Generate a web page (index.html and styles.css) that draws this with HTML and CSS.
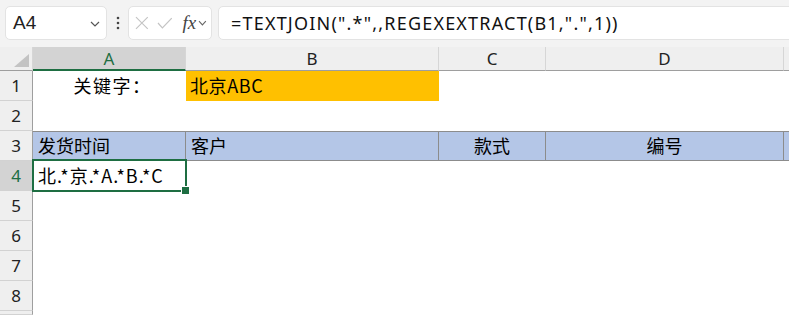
FILE: index.html
```html
<!DOCTYPE html>
<html lang="zh-CN">
<head>
    <meta charset="UTF-8">
    <title>TEXTJOIN</title>
    <link rel="stylesheet" href="styles.css">
</head>
<body>

    <!-- Formula bar -->
    <div class="toolbar">
        <div class="namebox">
            <span>A4</span>
            <svg class="chev" width="10" height="6" viewBox="0 0 10 6"><path d="M1 1 L5 5 L9 1" fill="none" stroke="#555" stroke-width="1.2"/></svg>
        </div>
        <div class="dots">
            <svg width="4" height="14" viewBox="0 0 4 14"><circle cx="2" cy="2" r="1.3" fill="#444"/><circle cx="2" cy="7" r="1.3" fill="#444"/><circle cx="2" cy="12" r="1.3" fill="#444"/></svg>
        </div>
        <div class="fnbox">
            <svg width="14" height="14" viewBox="0 0 14 14"><path d="M1 1 L13 13 M13 1 L1 13" stroke="#c4c4c4" stroke-width="1.2"/></svg>
            <svg width="16" height="12" viewBox="0 0 16 12"><path d="M1 6 L5.5 11 L15 1" fill="none" stroke="#c4c4c4" stroke-width="1.2"/></svg>
            <span class="fx">fx</span>
            <svg width="9" height="6" viewBox="0 0 9 6"><path d="M1 1 L4.5 5 L8 1" fill="none" stroke="#666" stroke-width="1.1"/></svg>
        </div>
        <div class="formula">=TEXTJOIN(".*",,REGEXEXTRACT(B1,".",1))</div>
    </div>

    <!-- Sheet -->
    <div class="sheet">
        <div class="corner"><span class="tri"></span></div>
        <div class="colhead sel">A</div>
        <div class="colhead">B</div>
        <div class="colhead">C</div>
        <div class="colhead">D</div>
        <div class="colhead last"></div>

        <div class="rowhead">1</div>
        <div class="cell center label">关键字：</div>
        <div class="cell key">北京ABC</div>
        <div class="cell"></div>
        <div class="cell"></div>
        <div class="cell"></div>

        <div class="rowhead">2</div>
        <div class="cell"></div>
        <div class="cell"></div>
        <div class="cell"></div>
        <div class="cell"></div>
        <div class="cell"></div>

        <div class="rowhead">3</div>
        <div class="cell title">发货时间</div>
        <div class="cell title">客户</div>
        <div class="cell title center">款式</div>
        <div class="cell title center">编号</div>
        <div class="cell title"></div>

        <div class="rowhead sel">4</div>
        <div class="cell active">北.*京.*A.*B.*C</div>
        <div class="cell"></div>
        <div class="cell"></div>
        <div class="cell"></div>
        <div class="cell"></div>

        <div class="rowhead">5</div>
        <div class="cell"></div><div class="cell"></div><div class="cell"></div><div class="cell"></div><div class="cell"></div>
        <div class="rowhead">6</div>
        <div class="cell"></div><div class="cell"></div><div class="cell"></div><div class="cell"></div><div class="cell"></div>
        <div class="rowhead">7</div>
        <div class="cell"></div><div class="cell"></div><div class="cell"></div><div class="cell"></div><div class="cell"></div>
        <div class="rowhead">8</div>
        <div class="cell"></div><div class="cell"></div><div class="cell"></div><div class="cell"></div><div class="cell"></div>
        <div class="rowhead"></div>
        <div class="cell"></div><div class="cell"></div><div class="cell"></div><div class="cell"></div><div class="cell"></div>
    </div>

</body>
</html>
```

FILE: styles.css
```css
* {
    margin: 0;
    padding: 0;
    box-sizing: border-box;
}

body {
    width: 789px;
    height: 315px;
    overflow: hidden;
    background: #fff;
    font-family: "Noto Sans CJK SC", "Noto Sans", sans-serif;
    color: #000;
}

/* formula bar */
.toolbar {
    height: 47px;
    background: #f3f3f3;
    display: flex;
    align-items: flex-start;
    padding: 6px 0 0 5px;
}

.namebox {
    width: 102px;
    height: 34px;
    background: #fff;
    border: 1px solid #e3e3e3;
    border-radius: 5px;
    display: flex;
    align-items: center;
    justify-content: space-between;
    padding: 0 6px 0 7px;
    font-family: "Liberation Sans", sans-serif;
    font-size: 19px;
    color: #222;
}

.namebox .chev {
    margin-top: 2px;
}

.dots {
    width: 21px;
    height: 34px;
    display: flex;
    align-items: center;
    justify-content: center;
}

.fnbox {
    width: 84px;
    height: 34px;
    background: #fff;
    border: 1px solid #e3e3e3;
    border-radius: 5px;
    display: flex;
    align-items: center;
    padding: 0 4px 0 6px;
    gap: 8px;
}

.fnbox .fx {
    font-family: "Liberation Serif", serif;
    font-style: italic;
    font-size: 19px;
    color: #444;
    margin-left: 2px;
    margin-right: -6px;
}

.formula {
    flex: 1;
    height: 34px;
    margin-left: 6px;
    margin-right: -10px;
    background: #fff;
    border: 1px solid #e3e3e3;
    border-radius: 5px;
    padding-left: 12px;
    font-family: "Noto Sans", sans-serif;
    font-size: 18px;
    letter-spacing: 1.2px;
    line-height: 32px;
    color: #111;
}

/* sheet grid */
.sheet {
    display: grid;
    grid-template-columns: 33px 153px 253px 107px 238px 1fr;
    grid-template-rows: 24px repeat(8, 30px) 4px;
    overflow: hidden;
}

.corner {
    position: relative;
    background: #efefef;
    border-right: 1px solid #d6d6d6;
    border-bottom: 1px solid #9e9e9e;
}

.corner .tri {
    position: absolute;
    right: 3px;
    bottom: 3px;
    width: 0;
    height: 0;
    border-left: 15px solid transparent;
    border-bottom: 13px solid #c3c3c3;
}

.colhead {
    background: #efefef;
    border-right: 1px solid #d6d6d6;
    border-bottom: 1px solid #9e9e9e;
    font-family: "Noto Sans", sans-serif;
    font-size: 17px;
    line-height: 23px;
    text-align: center;
    color: #222;
}

.colhead.sel {
    background: #d3d3d3;
    color: #1e6e42;
    border-bottom: 2px solid #1e6e42;
}

.colhead.last {
    border-right: none;
}

.rowhead {
    background: #efefef;
    border-right: 1px solid #9e9e9e;
    border-bottom: 1px solid #d2d2d2;
    font-family: "Noto Sans", sans-serif;
    font-size: 17px;
    line-height: 29px;
    text-align: center;
    color: #222;
}

.rowhead.sel {
    background: #d3d3d3;
    color: #1e6e42;
}

.cell {
    font-size: 18px;
    line-height: 29px;
    padding-left: 5px;
    white-space: nowrap;
}

.cell.center {
    text-align: center;
    padding-left: 0;
}

.cell.label {
    letter-spacing: 1.5px;
    padding-left: 6px;
}

.cell.key {
    background: #ffc000;
    padding-left: 4px;
    letter-spacing: 0.6px;
}

.cell.title {
    background: #b4c6e7;
    border-top: 1px solid #8c8c8c;
    border-bottom: 1px solid #8c8c8c;
    border-right: 1px solid #8c8c8c;
    line-height: 27px;
}

.cell.active {
    position: relative;
    letter-spacing: 1px;
}

/* selection frame + fill handle */
.cell.active::before {
    content: "";
    position: absolute;
    left: -1px;
    top: -2px;
    right: -1px;
    bottom: -1px;
    border: 2px solid #1e6e42;
}

.cell.active::after {
    content: "";
    position: absolute;
    right: -4px;
    bottom: -4px;
    width: 7px;
    height: 7px;
    background: #1e6e42;
    border: 1px solid #fff;
}
```
